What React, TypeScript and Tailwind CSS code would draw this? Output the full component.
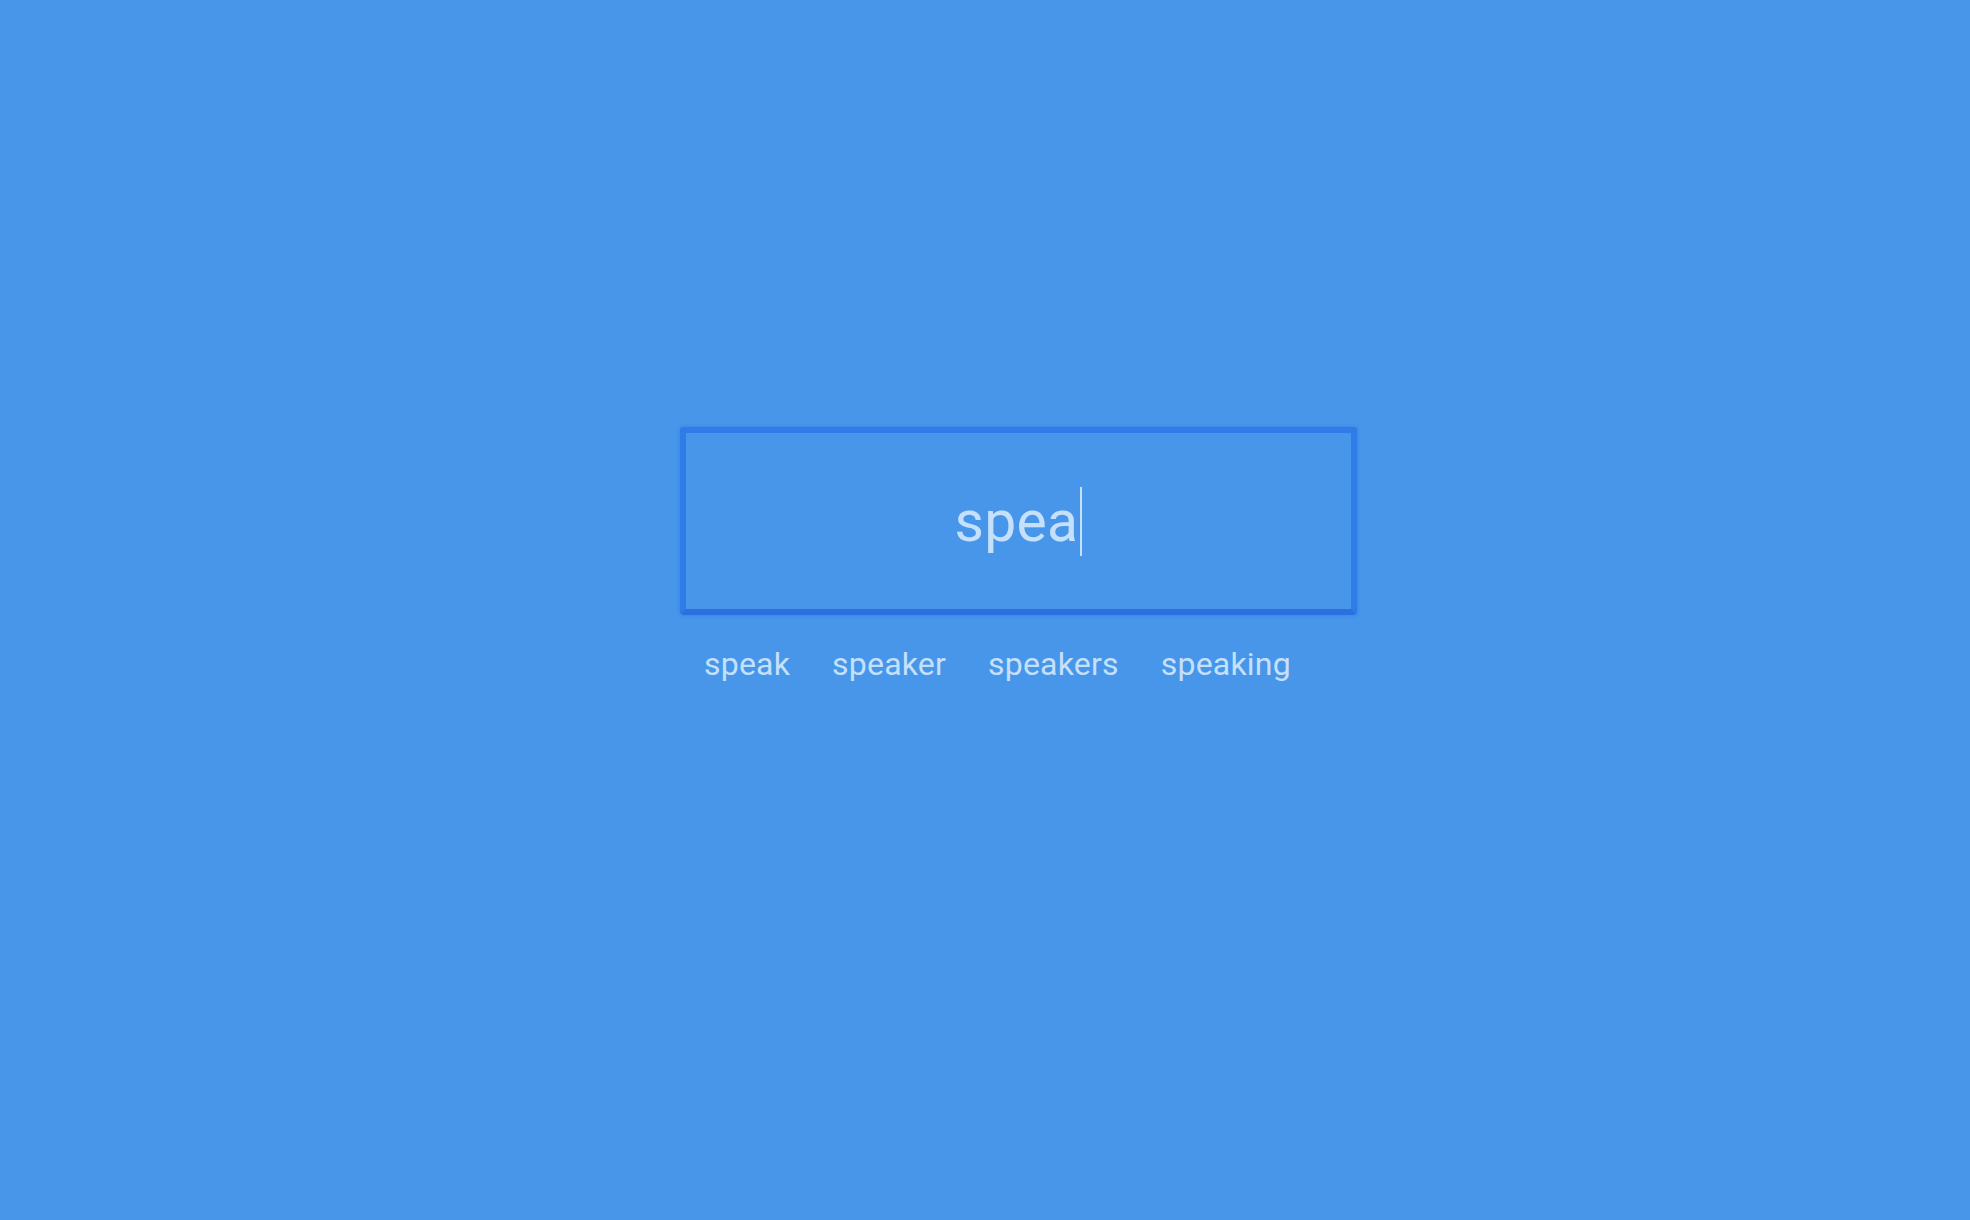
import React from "react";

export default function App() {
  const words = ["speak", "speaker", "speakers", "speaking"];
  return (
    <div
      className="w-[1970px] h-[1220px] bg-[#4796ea] overflow-hidden"
      style={{ fontFamily: "Roboto, 'Noto Sans', sans-serif" }}
    >
      <div className="pt-[427px] pl-[680px] flex flex-col">
        <div className="w-[677px] h-[188px] rounded-[4px] border-[6px] border-[#2f7be8] border-b-[#2b70de] shadow-[0_0_3px_1px_rgba(47,123,232,0.55)] flex items-center justify-center">
          <div className="flex items-center text-[57px] leading-none text-[#c5e0fa] tracking-[0.3px]">
            <span>spea</span>
            <span className="ml-[2px] w-[2px] h-[69px] bg-[#c5e0fa]" />
          </div>
        </div>
        <div className="flex mt-[33px] pl-[24px] gap-[42px] text-[32px] leading-none text-[#c5e0fa] tracking-[0.2px]">
          {words.map((w) => (
            <span key={w}>{w}</span>
          ))}
        </div>
      </div>
    </div>
  );
}
